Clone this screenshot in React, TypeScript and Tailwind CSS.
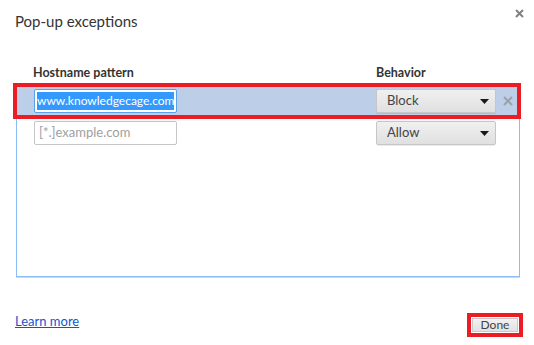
export default function App() {
  return (
    <div className="relative w-[534px] h-[345px] bg-white text-[#333] font-['Lato',sans-serif] overflow-hidden">
      <button
        type="button"
        className="absolute right-[8px] top-[6px] w-[14px] h-[14px] flex items-center justify-center"
      >
        <svg width="9" height="9" viewBox="0 0 9 9">
          <path d="M1 1 L8 8 M8 1 L1 8" stroke="#808080" strokeWidth="2" />
        </svg>
      </button>

      <div className="pl-[15px] pt-[10px] text-[15px] leading-[22px] text-[#333]">Pop-up exceptions</div>

      <div className="flex pl-[33px] pt-[33px] text-[12.5px] font-bold leading-[16px] text-[#333]">
        <div className="w-[343px]">Hostname pattern</div>
        <div>Behavior</div>
      </div>

      <div className="ml-[16px] w-[504px] mt-[3px] h-[193px] border border-[#8cbcf5] shadow-[0_1px_0_#d8d8d8]">
        <div className="relative flex items-center h-[32px] bg-[#bccee8]">
          <div className="absolute left-[-4px] right-[-2px] top-[-2px] bottom-[-2px] border-[4px] border-[#ec1c24]" />
          <div className="ml-[17px] shrink-0 w-[143px] h-[24px] rounded-[2px] border border-[#5a9ff0] bg-white flex items-center px-[2px] overflow-hidden">
            <span className="bg-[#3399ff] text-white text-[12px] leading-[18px] whitespace-nowrap">
              www.knowledgecage.com
            </span>
          </div>
          <Select label="Block" className="ml-[199px]" />
          <svg className="ml-[7px] shrink-0" width="10" height="10" viewBox="0 0 10 10">
            <path d="M1 1 L9 9 M9 1 L1 9" stroke="#9aa3ad" strokeWidth="2" />
          </svg>
        </div>
        <div className="flex items-center h-[32px]">
          <div className="ml-[17px] shrink-0 w-[143px] h-[24px] rounded-[2px] border border-[#c6c6c6] bg-white flex items-center px-[4px] text-[13px] text-[#a0a0a0]">
            [*.]example.com
          </div>
          <Select label="Allow" className="ml-[199px]" />
        </div>
      </div>

      <div className="flex items-center justify-between pl-[15px] pr-[11px] pt-[36px]">
        <a href="#" className="-mt-[8px] text-[13px] leading-[16px] text-[#1555cc] underline">
          Learn more
        </a>
        <div className="border-[4px] border-[#ec1c24] p-[1px]">
          <button
            type="button"
            className="block w-[46px] h-[14px] border border-[#c8c8c8] bg-gradient-to-b from-[#f2f2f2] to-[#e2e2e2] text-[12px] leading-[12px] text-[#444]"
          >
            Done
          </button>
        </div>
      </div>
    </div>
  );
}

function Select({ label, className }: { label: string; className: string }) {
  return (
    <div
      className={`${className} shrink-0 w-[120px] h-[24px] rounded-[2px] border border-[#c6c6c6] bg-gradient-to-b from-[#f0f0f0] to-[#e0e0e0] flex items-center justify-between pl-[10px] pr-[6px] text-[13px] text-[#444] shadow-[0_1px_0_rgba(0,0,0,0.08)]`}
    >
      <span>{label}</span>
      <svg width="9" height="5" viewBox="0 0 9 5">
        <path d="M0 0 H9 L4.5 5 Z" fill="#1a1a1a" />
      </svg>
    </div>
  );
}
